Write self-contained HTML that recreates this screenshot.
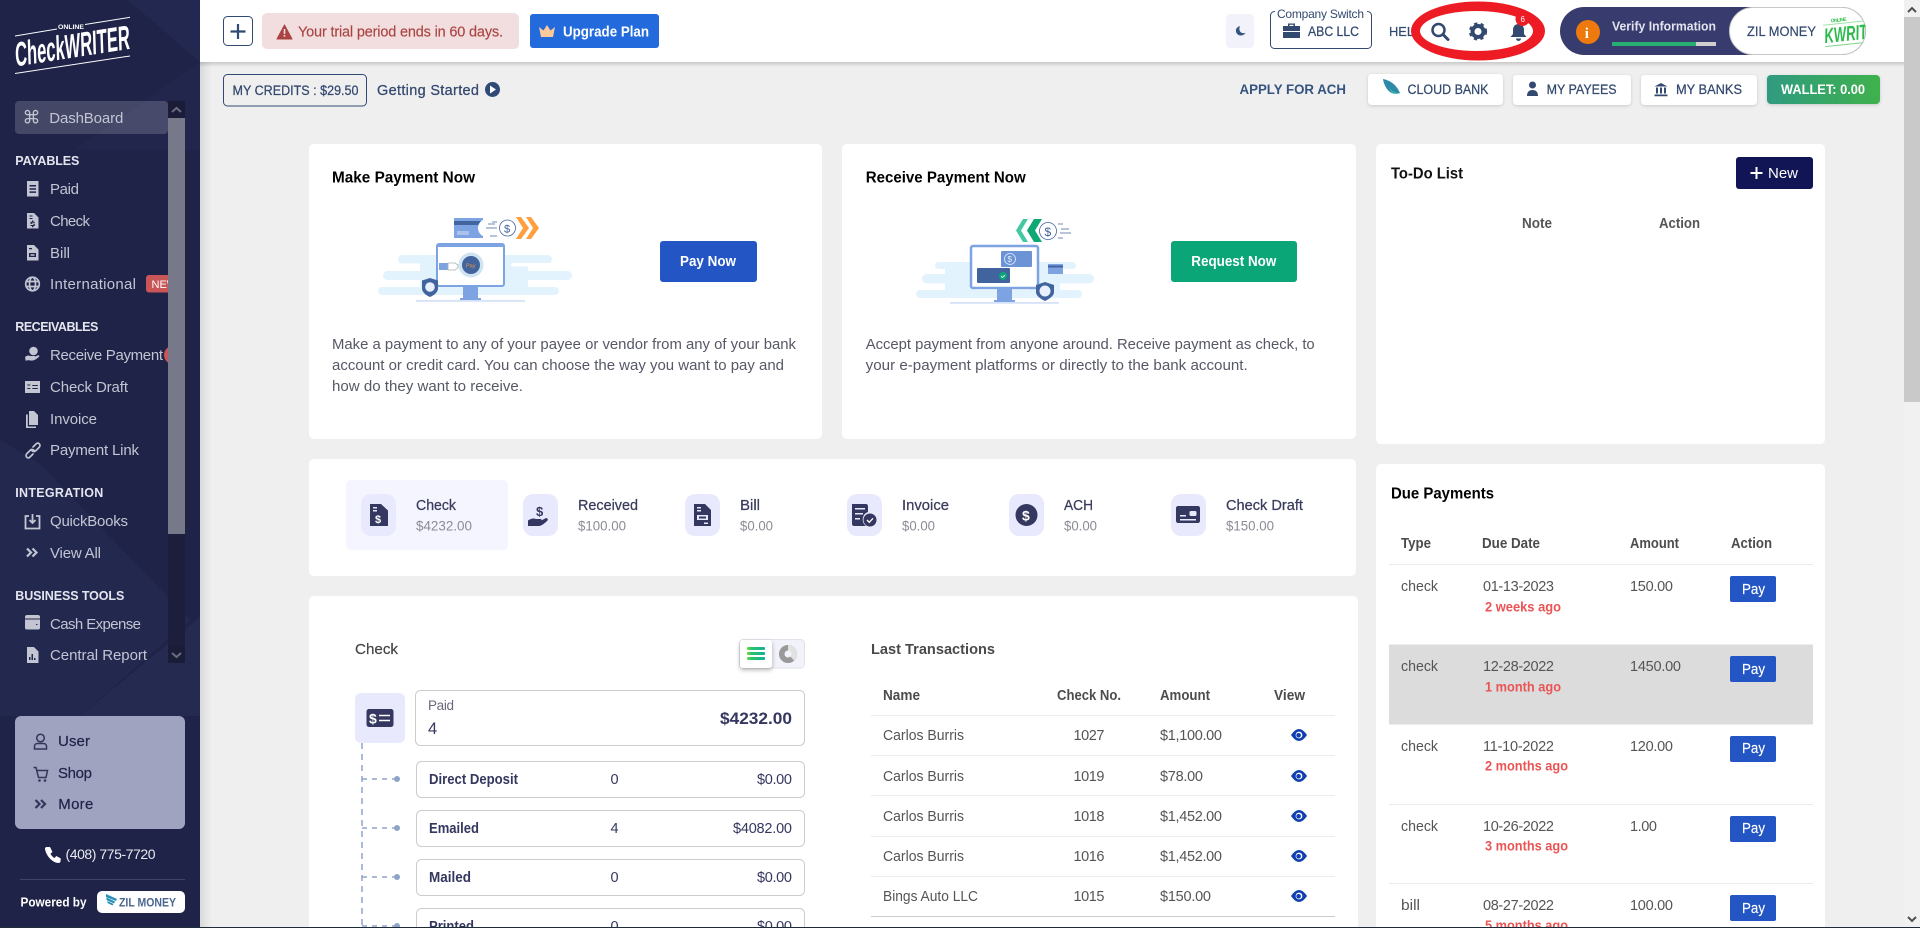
<!DOCTYPE html>
<html lang="en"><head><meta charset="utf-8"><title>CheckWriter Dashboard</title>
<style>
html,body{margin:0;padding:0;width:1920px;height:928px;overflow:hidden;background:#efefef}
svg{display:block}
text{font-family:"Liberation Sans",Arial,sans-serif}
.n{font-size:15px;fill:#c3c5d3}
.h{font-size:12.5px;font-weight:700;fill:#e4e5ee}
.u{font-size:15px;fill:#20244a;stroke:#20244a;stroke-width:.2px}
.hd{font-size:13.5px;fill:#34496f;stroke:#34496f;stroke-width:.25px}
.p{font-size:15px;fill:#565866}
.t{font-size:16px;font-weight:700;fill:#000}
.st{font-size:14.5px;fill:#3a3c5c;stroke:#3a3c5c;stroke-width:.25px}
.sa{font-size:13.5px;fill:#8b8b96}
.r{font-size:14.5px;font-weight:700;fill:#34375f}
.rv{font-size:14.5px;fill:#34375f}
.th{font-size:14.5px;fill:#4c4c4c;font-weight:700}
.td{font-size:14.5px;fill:#555}
.red{font-size:13.5px;font-weight:700;fill:#ea5455}
.pay{font-size:14.5px;fill:#fff;stroke:#fff;stroke-width:.15px}
.ic{fill:#c3c5d3}
.dk{fill:#34375f}
</style></head><body>
<svg width="1920" height="928" viewBox="0 0 1920 928" xmlns="http://www.w3.org/2000/svg">
<defs>
<linearGradient id="sd" x1="0" x2="1" y1="0" y2="0"><stop offset="0" stop-color="#000" stop-opacity=".09"/><stop offset="1" stop-color="#000" stop-opacity="0"/></linearGradient>
<linearGradient id="hs" x1="0" x2="0" y1="0" y2="1"><stop offset="0" stop-color="#000" stop-opacity=".16"/><stop offset="1" stop-color="#000" stop-opacity="0"/></linearGradient>
<linearGradient id="wg" x1="0" x2="1" y1="0" y2="0"><stop offset="0" stop-color="#2f9b80"/><stop offset="1" stop-color="#3fb14c"/></linearGradient>
<linearGradient id="lg" x1="0" x2="1" y1="0" y2="0"><stop offset="0" stop-color="#6fdc3a"/><stop offset=".25" stop-color="#2bc46a"/><stop offset="1" stop-color="#12b098"/></linearGradient>
<filter id="bs" x="-10%" y="-20%" width="120%" height="150%"><feDropShadow dx="0" dy="1" stdDeviation="1.5" flood-color="#000" flood-opacity=".16"/></filter>
<filter id="ts" x="-30%" y="-30%" width="160%" height="170%"><feDropShadow dx="0" dy="2" stdDeviation="2" flood-color="#000" flood-opacity=".3"/></filter>
<clipPath id="sc"><rect x="0" y="95" width="168" height="575"/></clipPath>
<clipPath id="pc"><rect x="1729" y="7" width="137" height="48" rx="24"/></clipPath>
</defs>

<!-- page -->
<rect width="1920" height="928" fill="#efefef"/>
<rect x="200" y="0" width="12" height="928" fill="url(#sd)"/>

<!-- sidebar -->
<rect width="200" height="928" fill="#1f2347"/>
<polygon points="128,0 200,0 200,62" fill="#232850"/>
<polygon points="75,150 200,62 200,150" fill="#232850" opacity=".7"/>
<polygon points="0,440 40,464 190,620 80,716 0,716" fill="#262b52" opacity=".75"/>
<polygon points="200,617 80,716 200,716" fill="#252a50"/>

<!-- logo -->
<g fill="#fff">
<path d="M15 35.5 L57 28.5 L57 29.5 L15 36.5Z M85 24 L130 16.8 L130 17.8 L85 25Z M15 73 L130 55.5 L130 56.5 L15 74Z"/>
<text x="58" y="29" font-size="6.5" font-weight="700" textLength="26" lengthAdjust="spacingAndGlyphs">ONLINE</text>
<text transform="translate(15.5,66.5) rotate(-8.8) skewX(-7)" font-size="34" font-weight="700" textLength="116" lengthAdjust="spacingAndGlyphs">CheckWRITER</text>
</g>

<!-- sidebar nav -->
<rect x="15" y="101" width="153" height="33" rx="4" fill="#fff" fill-opacity=".17"/>
<text x="22.5" y="123.500" font-size="18" style="font-family:'DejaVu Sans',sans-serif" fill="#c3c5d3">⌘</text>
<text class="n" x="49.3" y="123" textLength="74">DashBoard</text>

<text class="h" x="15.3" y="165" textLength="64">PAYABLES</text>
<g clip-path="url(#sc)">
<path class="ic" d="M27 181h11.500v15.500H27Zm2.500 4v1.500h6.500V185Zm0 3.200v1.500h6.500v-1.500Zm0 3.200v1.500h6.500v-1.500Z" fill-rule="evenodd"/>
<text class="n" x="50" y="194" textLength="29">Paid</text>
<path class="ic" d="M27 213h7l4.500 4.500V228.500H27Zm2.500 2.500v1h3v-1Zm0 2.500v1h3v-1Zm2.500 2.500v1.200h-1.500v2.300h3v1h-3v1h1.500v1.200h1.300v-1.200h1.500v-2.300h-3v-1h3v-1h-1.500v-1.200Z" fill-rule="evenodd"/>
<text class="n" x="50" y="226" textLength="40">Check</text>
<path class="ic" d="M27 245h7l4.500 4.500V260.500H27Zm2 3v1.300h3V248Zm0 5v4h7v-4Zm1.500 1.200h4v1.500h-4Z" fill-rule="evenodd"/>
<text class="n" x="50" y="258" textLength="20">Bill</text>
<g fill="none" stroke="#c3c5d3" stroke-width="1.700"><circle cx="32.500" cy="284" r="6.800"/><ellipse cx="32.500" cy="284" rx="3" ry="6.800"/><path d="M25.500 281.500h14M25.500 286.500h14"/></g>
<text class="n" x="50" y="289" textLength="86">International</text>
<rect x="146" y="275" width="40" height="17.500" rx="3" fill="#c95656"/>
<text x="151.500" y="288" font-size="11" fill="#fff">NEW</text>

<path class="ic" d="M25 357c2-1.500 3.500-2 5-1h4.500c1 0 1 1.500 0 1.500H31.500c2 .3 5-1.500 6.500-2.200 1.400-.3 1.800 1 .7 1.800-2.500 2-4.500 3.500-7 3.500-2 0-3.500-.6-5-.2l-1 .6Z"/><circle class="ic" cx="33.500" cy="351" r="4.300"/>
<text class="n" x="50" y="360" textLength="113">Receive Payment</text>
<circle cx="173" cy="355" r="9" fill="#c95656"/>

<path class="ic" d="M25 381h15v12H25Zm2.300 3.500v1h3v-1Zm0 3.500v1h3v-1Zm5-3v1h5.500v-1Zm0 3v1h5.500v-1Z" fill-rule="evenodd"/>
<text class="n" x="50" y="392" textLength="78">Check Draft</text>
<path class="ic" d="M29 411h5l4 4v10h-9Z"/><path class="ic" d="M26 414.500h1.800v12h8.200v1.500H26Z"/>
<text class="n" x="50" y="424" textLength="47">Invoice</text>
<g fill="none" stroke="#c3c5d3" stroke-width="1.700" stroke-linecap="round"><path d="M33 447l3-3c2.500-2.500 5.500 1 3 3.500l-3 3c-2 2-4.500.5-4.500-1"/><path d="M33 454l-3 3c-2.500 2.500-5.500-1-3-3.500l3-3c2-2 4.500-.5 4.500 1"/></g>
<text class="n" x="50" y="455" textLength="89">Payment Link</text>
</g>

<text class="h" x="15.300" y="331" textLength="83">RECEIVABLES</text>
<text class="h" x="15.300" y="497" textLength="88">INTEGRATION</text>

<g fill="none" stroke="#c3c5d3" stroke-width="1.800"><path d="M29 516h-3.500v12.500h14V516H36"/><path d="M32.500 514v9m-3-3 3 3 3-3"/></g>
<text class="n" x="50" y="526" textLength="78">QuickBooks</text>
<path d="M27 548.500l4 4-4 4M32.500 548.500l4 4-4 4" fill="none" stroke="#c3c5d3" stroke-width="2.200"/>
<text class="n" x="50" y="558" textLength="51">View All</text>

<text class="h" x="15.300" y="600" textLength="109">BUSINESS TOOLS</text>
<path class="ic" d="M25 617c0-1.500 1-2 2-2h11c1 0 2 .5 2 2v1.500H25Z"/><path class="ic" d="M25 619.500h15V628c0 .8-.7 1.500-1.500 1.500h-12c-.8 0-1.500-.7-1.500-1.500Zm11 4.500v1h1.500v-1Z" fill-rule="evenodd"/>
<text class="n" x="50" y="629" textLength="91">Cash Expense</text>
<path class="ic" d="M27 647h7l4.500 4.500V663H27Zm2 13h1.500v-3H29Zm2.500 0H33v-6h-1.500Zm2.500 0h1.500v-2H34Z" fill-rule="evenodd"/>
<text class="n" x="50" y="660" textLength="97">Central Report</text>

<!-- sidebar scrollbar -->
<rect x="168" y="101" width="17" height="17" fill="#1a1c38"/>
<rect x="168" y="118" width="17" height="416" fill="#77788a"/>
<rect x="168" y="534" width="17" height="112" fill="#1c1e3c"/>
<rect x="168" y="646" width="17" height="17" fill="#1b1d38"/>
<path d="M172 112l4.500-4 4.500 4" fill="none" stroke="#6b6c7e" stroke-width="2"/>
<path d="M172 653l4.500 4 4.500-4" fill="none" stroke="#6b6c7e" stroke-width="2"/>

<!-- user panel -->
<rect x="15" y="716" width="170" height="113" rx="6" fill="#9fa3bf"/>
<g fill="none" stroke="#33365a" stroke-width="1.500"><circle cx="40.500" cy="738" r="3.800"/><path d="M34.500 747.500v-1.500c0-1.500 1.500-2.500 3-2.500h6c1.500 0 3 1 3 2.500v3h-12Z"/>
<path d="M33.500 767.500h2.500l2.500 10h7.500l1.500-7h-10.500"/></g>
<circle cx="39.500" cy="780.500" r="1.300" fill="#33365a"/><circle cx="45" cy="780.500" r="1.300" fill="#33365a"/>
<path d="M35.500 800l4 4-4 4M41 800l4 4-4 4" fill="none" stroke="#33365a" stroke-width="2.200"/>
<text class="u" x="58" y="746" textLength="32">User</text>
<text class="u" x="58" y="778" textLength="34">Shop</text>
<text class="u" x="58.300" y="809" textLength="35">More</text>

<path d="M47 847l3 0 2.500 5-2 1.800c1 2 2.300 3.300 4 4.200l1.800-2 4.500 2.500-.3 3c-.2 1-1 1.500-2 1.500-6 0-13-8-13.500-14.500 0-.8.800-1.500 2-1.500Z" fill="#fff"/>
<text x="65.500" y="859" font-size="14" fill="#e8e8f0" textLength="90">(408) 775-7720</text>
<rect x="20" y="879" width="165" height="1" fill="#40446b"/>
<text x="20.500" y="906.500" font-size="12.500" font-weight="700" fill="#fff" textLength="66" lengthAdjust="spacingAndGlyphs">Powered by</text>
<rect x="97" y="891" width="88" height="22" rx="5" fill="#fff"/>
<path d="M106 894l11 5-1 2-10-4Zm.500 3.500 8.500 4-1 2-7.500-3.500Zm1 3.500 6 3-1 1.500-5-2.500Z" fill="#2a8fb5"/>
<text x="119" y="906.500" font-size="12" font-weight="700" fill="#4a6690" textLength="57" lengthAdjust="spacingAndGlyphs">ZIL MONEY</text>

<!-- header -->
<rect x="200" y="62" width="1704" height="5" fill="url(#hs)"/>
<rect x="200" y="0" width="1704" height="62" fill="#fff"/>
<rect x="223.500" y="16.500" width="29" height="29" rx="4" fill="#fff" stroke="#2f4a75"/>
<path d="M238 24v15M230.500 31.500h15" stroke="#2f4a75" stroke-width="2.200"/>
<rect x="262" y="13" width="257" height="36" rx="5" fill="#f2dede"/>
<path d="M284.500 25l7.500 14h-15Z" fill="#a94442" stroke="#a94442" stroke-linejoin="round"/>
<rect x="283.700" y="29" width="1.600" height="5" fill="#f2dede"/><rect x="283.700" y="35" width="1.600" height="1.700" fill="#f2dede"/>
<text x="298" y="36.500" font-size="14.500" fill="#a94442" stroke="#a94442" stroke-width=".15" textLength="205">Your trial period ends in 60 days.</text>
<rect x="530" y="14" width="129" height="34" rx="3" fill="#236bdc"/>
<path d="M541 37l-2-10 4.500 3.500L547 25l3.500 5.500L555 27l-2 10Z" fill="#fcc99a"/>
<text x="563" y="36.500" font-size="14.500" font-weight="700" fill="#fff" textLength="86" lengthAdjust="spacingAndGlyphs">Upgrade Plan</text>

<rect x="1226" y="14" width="28" height="34" rx="4" fill="#f1f2fa"/>
<path d="M1240 26c-3 1-4.500 3-4 5.500.5 3 4 5 7 3.500 1-.4 2-1 2.500-2-3 .7-5.500-.5-6-3-.3-1.500 0-3 .5-4Z" fill="#34537f"/>
<rect x="1270.500" y="11.500" width="101" height="37" rx="4" fill="#fff" stroke="#34496f"/>
<rect x="1275" y="6" width="92" height="12" fill="#fff"/>
<text x="1277" y="18" font-size="12" fill="#34496f" textLength="87">Company Switch</text>
<path d="M1288 26v-2.500h7V26h5v5h-17v-5Zm1.500 0h4v-1.200h-4Z" fill="#34496f" fill-rule="evenodd"/><path d="M1283 32h17v6h-17Z" fill="#34496f"/>
<text class="hd" x="1308" y="36" textLength="51" lengthAdjust="spacingAndGlyphs">ABC LLC</text>
<text x="1389" y="36" font-size="13" fill="#34496f" stroke="#34496f" stroke-width=".2" textLength="25" lengthAdjust="spacingAndGlyphs">HEL</text>

<path fill-rule="evenodd" fill="#ed1c24" d="M1411 31a67 29.500 0 1 0 134 0a67 29.500 0 1 0-134 0Zm9 0a56.500 20 0 1 1 113 0a56.500 20 0 1 1-113 0Z"/>
<circle cx="1438.500" cy="30" r="6" fill="none" stroke="#34496f" stroke-width="2.500"/>
<path d="M1443 34.500l5 5" stroke="#34496f" stroke-width="3" stroke-linecap="round"/>
<circle cx="1478" cy="31.500" r="5.500" fill="none" stroke="#34496f" stroke-width="4"/>
<circle cx="1478" cy="31.500" r="8" fill="none" stroke="#34496f" stroke-width="2.200" stroke-dasharray="3.300 3.400"/>
<path d="M1518.500 24c-3.500 0-5.500 2.500-5.500 6v4l-2.500 3h16l-2.500-3v-4c0-3.500-2-6-5.500-6Z" fill="#34496f"/>
<path d="M1516 38.500h5a2.500 2.500 0 0 1-5 0Z" fill="#34496f"/>
<circle cx="1522.500" cy="19" r="7" fill="#ed1c24"/>
<text x="1520.500" y="22" font-size="8" fill="#fff">6</text>

<rect x="1560" y="7" width="306" height="48" rx="24" fill="#383b6d"/>
<circle cx="1588" cy="32" r="12" fill="#ee7a0e"/>
<text x="1584.800" y="38" font-size="15" font-weight="700" fill="#fff" style="font-family:'Liberation Serif',serif">i</text>
<text x="1612" y="30.500" font-size="13" font-weight="700" fill="#e3e3ee" textLength="104" lengthAdjust="spacingAndGlyphs">Verify Information</text>
<rect x="1612" y="42" width="84" height="4" fill="#27ae70"/><rect x="1696" y="42" width="20" height="4" fill="#cfcfcf"/>
<rect x="1729.500" y="7.500" width="136" height="47" rx="23.500" fill="#fff" stroke="#c9c9c9"/>
<text x="1747" y="36" font-size="14" fill="#34496f" stroke="#34496f" stroke-width=".2" textLength="69" lengthAdjust="spacingAndGlyphs">ZIL MONEY</text>
<g clip-path="url(#pc)"><g transform="rotate(-6 1845 32)">
<text x="1832" y="21" font-size="5" font-weight="700" fill="#3bbf54" textLength="16">ONLINE</text>
<rect x="1824" y="22.500" width="44" height="1" fill="#9ee3a8"/>
<text x="1824" y="41" font-size="21" font-weight="700" font-style="italic" fill="#2bbb4c" textLength="43" lengthAdjust="spacingAndGlyphs">KWRIT</text>
<rect x="1824" y="44" width="44" height="1" fill="#7ad68a"/></g></g>

<!-- page scrollbar -->
<rect x="1904" y="0" width="16" height="928" fill="#f1f1f1"/>
<rect x="1904" y="17" width="16" height="385" fill="#c9c9c9"/>
<path d="M1908 12l4-4 4 4" fill="none" stroke="#505050" stroke-width="2"/>
<path d="M1908 917l4 4 4-4" fill="none" stroke="#505050" stroke-width="2"/>

<!-- sub header -->
<rect x="223.500" y="74.500" width="143" height="31.500" rx="4" fill="none" stroke="#2f4a75"/>
<text class="hd" x="232.500" y="95" textLength="126" lengthAdjust="spacingAndGlyphs">MY CREDITS : $29.50</text>
<text x="377" y="95" font-size="14.500" fill="#34496f" stroke="#34496f" stroke-width=".25" textLength="102">Getting Started</text>
<circle cx="492.500" cy="89.500" r="7.500" fill="#2f4a75"/><path d="M490 85.500l6 4-6 4Z" fill="#fff"/>

<text x="1239.500" y="94" font-size="13.500" font-weight="700" fill="#34537f" textLength="106.500" lengthAdjust="spacingAndGlyphs">APPLY FOR ACH</text>
<rect x="1368" y="74" width="135" height="31" rx="4" fill="#fff" filter="url(#bs)"/>
<path d="M1383 79c7 1.500 13 5 17 14-6 2-10 0-13-4-2-3-3.500-6-4-10Z" fill="#2c8aa8"/><path d="M1389 88c3 3 6 5 11 5-5 2-9 0-11-5Z" fill="#39b6a5"/>
<text class="hd" x="1407.500" y="94" textLength="81" lengthAdjust="spacingAndGlyphs">CLOUD BANK</text>
<rect x="1513" y="75" width="118" height="30" rx="4" fill="#fff" filter="url(#bs)"/>
<circle cx="1532.500" cy="85" r="3.500" fill="#34496f"/><path d="M1527 96c0-4 2-6 5.500-6s5.500 2 5.500 6Z" fill="#34496f"/>
<text class="hd" x="1546.600" y="94" textLength="70" lengthAdjust="spacingAndGlyphs">MY PAYEES</text>
<rect x="1641" y="75" width="116" height="30" rx="4" fill="#fff" filter="url(#bs)"/>
<path d="M1661 83l6.500 3.500h-13Zm-5 4.500h2v6h-2Zm4 0h2v6h-2Zm4 0h2v6h-2Zm-9.500 7h13v1.800h-13Z" fill="#34496f"/>
<text class="hd" x="1676" y="94" textLength="66" lengthAdjust="spacingAndGlyphs">MY BANKS</text>
<rect x="1767" y="75" width="113" height="29" rx="4" fill="url(#wg)" filter="url(#bs)"/>
<text x="1781" y="94" font-size="13.500" font-weight="700" fill="#fff" textLength="84" lengthAdjust="spacingAndGlyphs">WALLET: 0.00</text>

<!-- make payment card -->
<rect x="309" y="144" width="513" height="295" rx="5" fill="#fff"/>
<text class="t" x="332" y="182.500" textLength="143" lengthAdjust="spacingAndGlyphs">Make Payment Now</text>
<g fill="#e3f3fd">
<rect x="398" y="255" width="154" height="8.500" rx="4.200"/>
<rect x="383" y="271" width="189" height="9" rx="4.500"/>
<rect x="378" y="287" width="181" height="8" rx="4"/>
<rect x="420" y="255" width="30" height="40"/><rect x="500" y="263" width="28" height="32"/>
</g>
<rect x="511" y="263" width="60" height="3.500" fill="#fff" rx="1.700"/>
<rect x="537" y="280" width="36" height="6.500" fill="#fff"/>
<rect x="416" y="300" width="109" height="1.800" fill="#d5e2f8"/>
<path d="M463 287h15v11h3v2h-21v-2h3Z" fill="#7ea3e3"/>
<rect x="437" y="244" width="67" height="42" rx="2" fill="#fff" stroke="#7ea3e3" stroke-width="2"/>
<rect x="437" y="244" width="67" height="3" fill="#7ea3e3"/>
<rect x="439" y="263" width="9" height="7" fill="#7ea3e3"/>
<path d="M448 263h7l3 2v2.500l-3 2.500h-7Z" fill="#fff" stroke="#9fb5a8" stroke-width=".8"/>
<circle cx="471" cy="265" r="12.500" fill="#cfe3f0"/><circle cx="471" cy="265" r="9" fill="#41639e"/>
<text x="466" y="267.500" font-size="5.500" fill="#f09a3e">Pay</text>
<path d="M430 278l8 2.500v8c0 4-4.500 7-8 8.500-3.500-1.500-8-4.500-8-8.500v-8Z" fill="#41639e"/>
<circle cx="430" cy="287" r="4.800" fill="#e8f1fb"/>
<path d="M454 218h29v20h-29Z" fill="#7ea3e3"/><rect x="454" y="221" width="29" height="4" fill="#41639e"/><rect x="457" y="231" width="12" height="4" fill="#a9c3ee"/>
<circle cx="487" cy="228" r="9" fill="#fff"/>
<circle cx="507.500" cy="228" r="8" fill="#fff" stroke="#41639e" stroke-width=".8"/>
<text x="504" y="232.500" font-size="11" fill="#41639e">$</text>
<path d="M486 228h11M488 224h7M492 222h5M490 236h7" stroke="#41639e" stroke-width=".8"/>
<path d="M516 217h5l8 11-8 11h-5l7-11Z" fill="#ff9f3f"/><path d="M526 217h5l8 11-8 11h-5l7-11Z" fill="#ff9f3f"/>
<rect x="660" y="241" width="97" height="41" rx="3" fill="#2356c4"/>
<text x="680" y="266" font-size="15" font-weight="700" fill="#fff" textLength="56" lengthAdjust="spacingAndGlyphs">Pay Now</text>
<text class="p" x="332" y="349" textLength="464" lengthAdjust="spacingAndGlyphs">Make a payment to any of your payee or vendor from any of your bank</text>
<text class="p" x="332" y="370" textLength="452" lengthAdjust="spacingAndGlyphs">account or credit card. You can choose the way you want to pay and</text>
<text class="p" x="332" y="391" textLength="191" lengthAdjust="spacingAndGlyphs">how do they want to receive.</text>

<!-- receive payment card -->
<rect x="842" y="144" width="514" height="295" rx="5" fill="#fff"/>
<text class="t" x="865.700" y="182.500" textLength="160" lengthAdjust="spacingAndGlyphs">Receive Payment Now</text>
<g fill="#e3f3fd">
<rect x="935" y="262" width="141" height="7" rx="3.500"/>
<rect x="922" y="274" width="172" height="9.500" rx="4.700"/>
<rect x="916" y="290" width="166" height="8" rx="4"/>
<rect x="945" y="262" width="30" height="36"/><rect x="1030" y="269" width="30" height="29"/>
</g>
<rect x="950" y="302" width="109" height="1.800" fill="#d5e2f8"/>
<path d="M997 289h15v11h3v2h-21v-2h3Z" fill="#7ea3e3"/>
<rect x="971" y="246" width="67" height="42" rx="2" fill="#fff" stroke="#7ea3e3" stroke-width="2.500"/>
<rect x="1001" y="251" width="31" height="16" rx="1" fill="#6b93d6"/>
<circle cx="1010" cy="259" r="5.500" fill="none" stroke="#e3f0fd" stroke-width=".8"/>
<text x="1007.500" y="262" font-size="8" fill="#e3f0fd">$</text>
<rect x="977" y="268" width="33" height="15" rx="1" fill="#41639e"/>
<circle cx="1003" cy="276" r="4" fill="#0ba678"/><path d="M1001 276l1.500 1.500 2.500-2.500" fill="none" stroke="#fff" stroke-width=".8"/>
<rect x="1048" y="264" width="15" height="10" fill="#7ea3e3"/><rect x="1048" y="265.500" width="15" height="2" fill="#41639e"/>
<path d="M1045 282l9 3v7c0 4-5 7-9 9-4-2-9-5-9-9v-7Z" fill="#41639e"/>
<circle cx="1045" cy="291" r="5.500" fill="#e8f1fb"/>
<path d="M1023 219h5l-7 11.500 7 11.500h-5l-7-11.500Z" fill="#42c9a3"/><path d="M1034 219h8l-7 11.500 7 11.500h-8l-7-11.500Z" fill="#0ea875"/>
<circle cx="1048" cy="231" r="8.500" fill="#fff" stroke="#41639e" stroke-width=".8"/>
<text x="1044.500" y="236" font-size="12" fill="#41639e">$</text>
<path d="M1058 224h5M1061 229h8M1060 233h11M1058 238h5" stroke="#41639e" stroke-width=".8"/>
<rect x="1171" y="241" width="126" height="41" rx="3" fill="#0ba678"/>
<text x="1191.300" y="266" font-size="15" font-weight="700" fill="#fff" textLength="85" lengthAdjust="spacingAndGlyphs">Request Now</text>
<text class="p" x="865.700" y="349" textLength="449" lengthAdjust="spacingAndGlyphs">Accept payment from anyone around. Receive payment as check, to</text>
<text class="p" x="865.700" y="370" textLength="382" lengthAdjust="spacingAndGlyphs">your e-payment platforms or directly to the bank account.</text>

<!-- stats card -->
<rect x="309" y="459" width="1047" height="117" rx="5" fill="#fff"/>
<rect x="346" y="480" width="162" height="70" rx="5" fill="#f5f5ff"/>
<g fill="#e9e9fd">
<rect x="361" y="494" width="35" height="42" rx="10"/><rect x="523" y="494" width="35" height="42" rx="10"/><rect x="685" y="494" width="35" height="42" rx="10"/>
<rect x="847" y="494" width="35" height="42" rx="10"/><rect x="1009" y="494" width="35" height="42" rx="10"/><rect x="1171" y="494" width="35" height="42" rx="10"/>
</g>
<path class="dk" d="M370 504h11l7 6.500V526H370Zm3 3v1.500h4V507Zm0 3v1.500h4V510Z" fill-rule="evenodd"/>
<text x="375" y="523" font-size="11" font-weight="700" fill="#fff">$</text>
<text x="536" y="516" font-size="13" font-weight="700" fill="#34375f">$</text>
<path class="dk" d="M528 526v-5.500c3-2 5.500-2.500 8-1.500h4.500c1.500 0 1.500 2.500 0 2.500H536c3 .5 6.500-1.500 9-3 2-1 3.500.5 2.500 2-3 3-6 5.500-9 5.500Z"/>
<path class="dk" d="M694 504h11l6 6v16h-17Zm3 3v1.500h4V507Zm0 3v1.500h4V510Zm0 5v5h11v-5Zm2 1.500h7v2h-7Zm5 6v1.500h4v-1.500Z" fill-rule="evenodd"/>
<path class="dk" d="M852 504h14c1 0 2 1 2 2v6a8 8 0 0 0-2 14h-12c-1 0-2-1-2-2Zm3 4v1.500h10V508Zm0 5v1.500h8V513Zm0 5v1.500h5V518Z" fill-rule="evenodd"/>
<circle cx="870" cy="520" r="6.500" class="dk"/><path d="M867 520l2.300 2.300 3.700-4" fill="none" stroke="#fff" stroke-width="1.300"/>
<circle cx="1026.500" cy="515" r="11" class="dk"/>
<text x="1022" y="520.500" font-size="14" font-weight="700" fill="#fff">$</text>
<path class="dk" d="M1178 506h20c1 0 2 1 2 2v13c0 1-1 2-2 2h-20c-1 0-2-1-2-2v-13c0-1 1-2 2-2Zm2 9v1.500h6V515Zm0 4v1.500h16V519Zm11-8c-1 0-1.500.5-1.500 1.500v2c0 1 .5 1.500 1.500 1.500h4c1 0 1.500-.5 1.500-1.500v-2c0-1-.5-1.500-1.500-1.500Z" fill-rule="evenodd"/>

<text class="st" x="416" y="510" textLength="40" lengthAdjust="spacingAndGlyphs">Check</text><text class="sa" x="416" y="530.500" textLength="56" lengthAdjust="spacingAndGlyphs">$4232.00</text>
<text class="st" x="578" y="510" textLength="60" lengthAdjust="spacingAndGlyphs">Received</text><text class="sa" x="578" y="530.500" textLength="48" lengthAdjust="spacingAndGlyphs">$100.00</text>
<text class="st" x="740" y="510" textLength="20" lengthAdjust="spacingAndGlyphs">Bill</text><text class="sa" x="740" y="530.500" textLength="33" lengthAdjust="spacingAndGlyphs">$0.00</text>
<text class="st" x="902" y="510" textLength="47" lengthAdjust="spacingAndGlyphs">Invoice</text><text class="sa" x="902" y="530.500" textLength="33" lengthAdjust="spacingAndGlyphs">$0.00</text>
<text class="st" x="1064" y="510" textLength="29" lengthAdjust="spacingAndGlyphs">ACH</text><text class="sa" x="1064" y="530.500" textLength="33" lengthAdjust="spacingAndGlyphs">$0.00</text>
<text class="st" x="1226" y="510" textLength="77" lengthAdjust="spacingAndGlyphs">Check Draft</text><text class="sa" x="1226" y="530.500" textLength="48" lengthAdjust="spacingAndGlyphs">$150.00</text>

<!-- check card -->
<rect x="309" y="596" width="1049" height="340" rx="5" fill="#fff"/>
<text x="355" y="654" font-size="15" fill="#444" stroke="#444" stroke-width=".2" textLength="43" lengthAdjust="spacingAndGlyphs">Check</text>
<rect x="739.500" y="639.500" width="65" height="28.500" rx="4" fill="#f1f2fa" stroke="#e2e2ea"/>
<rect x="740" y="640" width="32" height="28" rx="3" fill="#fff" filter="url(#ts)"/>
<g fill="url(#lg)"><rect x="747" y="647" width="18" height="3" rx="1"/><rect x="747" y="652" width="18" height="3" rx="1"/><rect x="747" y="657" width="18" height="3" rx="1"/></g>
<circle cx="788" cy="654" r="9" fill="#999"/>
<path d="M788 645a9 9 0 0 1 9 9h-9Z" fill="#e2e2e2"/>
<path d="M788 654h9a9 9 0 0 1-3 6.500Z" fill="#e2e2e2"/>
<circle cx="788" cy="654" r="3.500" fill="#f1f2fa"/>

<rect x="355" y="693" width="50" height="50" rx="6" fill="#e9e9fd"/>
<rect x="366.500" y="709" width="27" height="18" rx="2.500" fill="#34375f"/>
<text x="369" y="723.500" font-size="14" font-weight="700" fill="#fff">$</text>
<path d="M379 715.500h11M379 720.500h11" stroke="#fff" stroke-width="1.500"/>
<rect x="415.500" y="690.500" width="389" height="55" rx="5" fill="#fff" stroke="#ccc"/>
<text x="428" y="710" font-size="13.500" fill="#6a6a80" textLength="26">Paid</text>
<text x="428" y="734" font-size="16.500" fill="#34375f">4</text>
<text x="720" y="724" font-size="17" font-weight="700" fill="#34375f" textLength="72" lengthAdjust="spacingAndGlyphs">$4232.00</text>

<path d="M362 743V928" stroke="#8fa3c8" stroke-width="1.500" stroke-dasharray="6 5" fill="none"/>
<path d="M362 779H397M362 828H397M362 877H397M362 926H397" stroke="#8fa3c8" stroke-width="1.500" stroke-dasharray="5 5" fill="none"/>
<g fill="#8fa3c8"><circle cx="397" cy="779" r="3"/><circle cx="397" cy="828" r="3"/><circle cx="397" cy="877" r="3"/><circle cx="397" cy="926" r="3"/></g>

<g fill="#fff" stroke="#ccc">
<rect x="416.500" y="761.500" width="388" height="36" rx="5"/>
<rect x="416.500" y="810.500" width="388" height="36" rx="5"/>
<rect x="416.500" y="859.500" width="388" height="36" rx="5"/>
<rect x="416.500" y="908.500" width="388" height="36" rx="5"/>
</g>
<text class="r" x="429" y="784" textLength="89" lengthAdjust="spacingAndGlyphs">Direct Deposit</text><text class="rv" x="610.500" y="784">0</text><text class="rv" x="757" y="784" textLength="35">$0.00</text>
<text class="r" x="429" y="833" textLength="50" lengthAdjust="spacingAndGlyphs">Emailed</text><text class="rv" x="610.500" y="833">4</text><text class="rv" x="733" y="833" textLength="59">$4082.00</text>
<text class="r" x="429" y="882" textLength="42" lengthAdjust="spacingAndGlyphs">Mailed</text><text class="rv" x="610.500" y="882">0</text><text class="rv" x="757" y="882" textLength="35">$0.00</text>
<text class="r" x="429" y="931" textLength="45" lengthAdjust="spacingAndGlyphs">Printed</text><text class="rv" x="610.500" y="931">0</text><text class="rv" x="757" y="931" textLength="35">$0.00</text>

<!-- last transactions -->
<text x="871" y="654" font-size="14.500" font-weight="700" fill="#4a4a4a" textLength="124" lengthAdjust="spacingAndGlyphs">Last Transactions</text>
<text class="th" x="883" y="700" textLength="37" lengthAdjust="spacingAndGlyphs">Name</text>
<text class="th" x="1057" y="700" textLength="64" lengthAdjust="spacingAndGlyphs">Check No.</text>
<text class="th" x="1160" y="700" textLength="50" lengthAdjust="spacingAndGlyphs">Amount</text>
<text class="th" x="1274" y="700" textLength="31" lengthAdjust="spacingAndGlyphs">View</text>
<g fill="#ececec"><rect x="871" y="715" width="464" height="1"/><rect x="871" y="755" width="464" height="1"/><rect x="871" y="795" width="464" height="1"/><rect x="871" y="836" width="464" height="1"/><rect x="871" y="876" width="464" height="1"/></g>
<rect x="871" y="916" width="464" height="1" fill="#ccc"/>
<text class="td" x="883" y="740" textLength="81" lengthAdjust="spacingAndGlyphs">Carlos Burris</text><text class="td" x="1073.500" y="740" textLength="31">1027</text><text class="td" x="1160" y="740" textLength="62">$1,100.00</text>
<text class="td" x="883" y="781" textLength="81" lengthAdjust="spacingAndGlyphs">Carlos Burris</text><text class="td" x="1073.500" y="781" textLength="31">1019</text><text class="td" x="1160" y="781" textLength="43">$78.00</text>
<text class="td" x="883" y="821" textLength="81" lengthAdjust="spacingAndGlyphs">Carlos Burris</text><text class="td" x="1073.500" y="821" textLength="31">1018</text><text class="td" x="1160" y="821" textLength="62">$1,452.00</text>
<text class="td" x="883" y="861" textLength="81" lengthAdjust="spacingAndGlyphs">Carlos Burris</text><text class="td" x="1073.500" y="861" textLength="31">1016</text><text class="td" x="1160" y="861" textLength="62">$1,452.00</text>
<text class="td" x="883" y="901" textLength="95" lengthAdjust="spacingAndGlyphs">Bings Auto LLC</text><text class="td" x="1073.500" y="901" textLength="31">1015</text><text class="td" x="1160" y="901" textLength="51">$150.00</text>
<g id="eyes">
<g transform="translate(1299,735)"><path d="M-8 0Q0-12 8 0Q0 12-8 0Z" fill="#0f3eb0"/><circle r="3.400" fill="#fff"/><circle cx="-.4" cy=".3" r="2.300" fill="#0f3eb0"/></g>
<g transform="translate(1299,776)"><path d="M-8 0Q0-12 8 0Q0 12-8 0Z" fill="#0f3eb0"/><circle r="3.400" fill="#fff"/><circle cx="-.4" cy=".3" r="2.300" fill="#0f3eb0"/></g>
<g transform="translate(1299,816)"><path d="M-8 0Q0-12 8 0Q0 12-8 0Z" fill="#0f3eb0"/><circle r="3.400" fill="#fff"/><circle cx="-.4" cy=".3" r="2.300" fill="#0f3eb0"/></g>
<g transform="translate(1299,856)"><path d="M-8 0Q0-12 8 0Q0 12-8 0Z" fill="#0f3eb0"/><circle r="3.400" fill="#fff"/><circle cx="-.4" cy=".3" r="2.300" fill="#0f3eb0"/></g>
<g transform="translate(1299,896)"><path d="M-8 0Q0-12 8 0Q0 12-8 0Z" fill="#0f3eb0"/><circle r="3.400" fill="#fff"/><circle cx="-.4" cy=".3" r="2.300" fill="#0f3eb0"/></g>
</g>

<!-- todo card -->
<rect x="1376" y="144" width="449" height="300" rx="5" fill="#fff"/>
<text x="1391" y="178.500" font-size="16" font-weight="700" fill="#111" textLength="72" lengthAdjust="spacingAndGlyphs">To-Do List</text>
<rect x="1736" y="157" width="77" height="32" rx="3" fill="#111455"/>
<path d="M1756.500 167v12M1750.500 173h12" stroke="#fff" stroke-width="2"/>
<text x="1768" y="178" font-size="14.500" fill="#fff" textLength="30" lengthAdjust="spacingAndGlyphs">New</text>
<text x="1522" y="228" font-size="14.500" font-weight="700" fill="#555" textLength="30" lengthAdjust="spacingAndGlyphs">Note</text>
<text x="1659" y="228" font-size="14.500" font-weight="700" fill="#555" textLength="41" lengthAdjust="spacingAndGlyphs">Action</text>

<!-- due payments -->
<rect x="1376" y="464" width="449" height="470" rx="5" fill="#fff"/>
<text class="t" x="1391" y="498.500" textLength="103" lengthAdjust="spacingAndGlyphs">Due Payments</text>
<text class="th" x="1401" y="548" textLength="30" lengthAdjust="spacingAndGlyphs">Type</text>
<text class="th" x="1482" y="548" textLength="58" lengthAdjust="spacingAndGlyphs">Due Date</text>
<text class="th" x="1630" y="548" textLength="49" lengthAdjust="spacingAndGlyphs">Amount</text>
<text class="th" x="1731" y="548" textLength="41" lengthAdjust="spacingAndGlyphs">Action</text>
<rect x="1389" y="564" width="424" height="1" fill="#ececec"/>
<rect x="1389" y="644.500" width="424" height="80" fill="#dcdcdc"/>
<rect x="1389" y="804" width="424" height="1" fill="#ececec"/>
<rect x="1389" y="883" width="424" height="1" fill="#ececec"/>

<text class="td" x="1401" y="591" textLength="37" lengthAdjust="spacingAndGlyphs">check</text><text class="td" x="1483" y="591" textLength="71">01-13-2023</text><text class="td" x="1630" y="591" textLength="43">150.00</text><text class="red" x="1485" y="611.500" textLength="76" lengthAdjust="spacingAndGlyphs">2 weeks ago</text>
<text class="td" x="1401" y="671" textLength="37" lengthAdjust="spacingAndGlyphs">check</text><text class="td" x="1483" y="671" textLength="71">12-28-2022</text><text class="td" x="1630" y="671" textLength="51">1450.00</text><text class="red" x="1485" y="691.500" textLength="76" lengthAdjust="spacingAndGlyphs">1 month ago</text>
<text class="td" x="1401" y="751" textLength="37" lengthAdjust="spacingAndGlyphs">check</text><text class="td" x="1483" y="751" textLength="71">11-10-2022</text><text class="td" x="1630" y="751" textLength="43">120.00</text><text class="red" x="1485" y="770.500" textLength="83" lengthAdjust="spacingAndGlyphs">2 months ago</text>
<text class="td" x="1401" y="831" textLength="37" lengthAdjust="spacingAndGlyphs">check</text><text class="td" x="1483" y="831" textLength="71">10-26-2022</text><text class="td" x="1630" y="831" textLength="27">1.00</text><text class="red" x="1485" y="850.500" textLength="83" lengthAdjust="spacingAndGlyphs">3 months ago</text>
<text class="td" x="1401" y="910" textLength="19" lengthAdjust="spacingAndGlyphs">bill</text><text class="td" x="1483" y="910" textLength="71">08-27-2022</text><text class="td" x="1630" y="910" textLength="43">100.00</text><text class="red" x="1485" y="930" textLength="83" lengthAdjust="spacingAndGlyphs">5 months ago</text>

<g fill="#2356c4"><rect x="1730" y="576" width="46" height="26" rx="2"/><rect x="1730" y="656" width="46" height="26" rx="2"/><rect x="1730" y="736" width="46" height="26" rx="2"/><rect x="1730" y="816" width="46" height="26" rx="2"/><rect x="1730" y="895" width="46" height="26" rx="2"/></g>
<text class="pay" x="1742" y="594" textLength="23" lengthAdjust="spacingAndGlyphs">Pay</text>
<text class="pay" x="1742" y="674" textLength="23" lengthAdjust="spacingAndGlyphs">Pay</text>
<text class="pay" x="1742" y="753" textLength="23" lengthAdjust="spacingAndGlyphs">Pay</text>
<text class="pay" x="1742" y="833" textLength="23" lengthAdjust="spacingAndGlyphs">Pay</text>
<text class="pay" x="1742" y="913" textLength="23" lengthAdjust="spacingAndGlyphs">Pay</text>

<!-- bottom edge -->
<rect x="0" y="927" width="1920" height="1" fill="#1e2b38"/>
</svg>
</body></html>
